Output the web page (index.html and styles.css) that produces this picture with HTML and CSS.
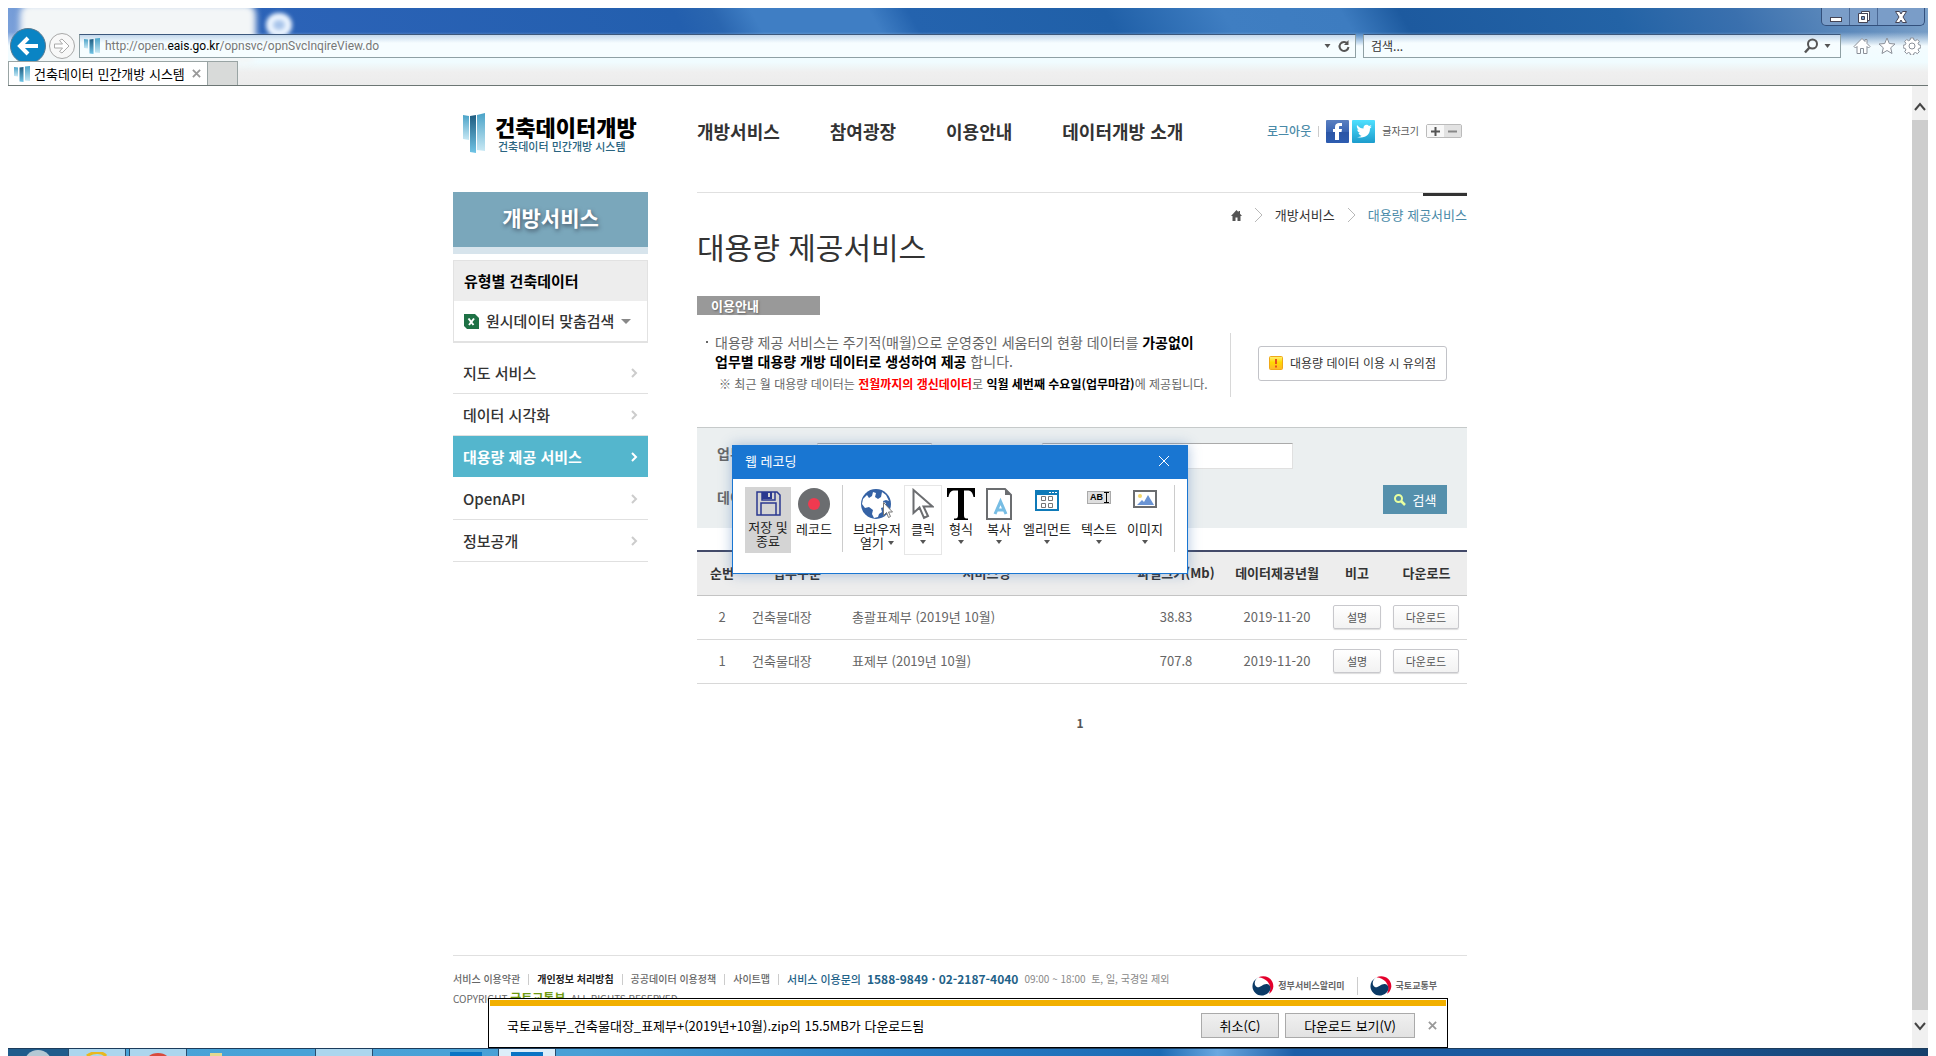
FILE: index.html
```html
<!DOCTYPE html>
<html lang="ko">
<head>
<meta charset="utf-8">
<title>건축데이터 민간개방 시스템</title>
<link rel="stylesheet" href="styles.css">
</head>
<body>
<svg class="defs" width="0" height="0" aria-hidden="true">
  <defs>
    <linearGradient id="g1" x1="0" y1="0" x2="0" y2="1"><stop offset="0" stop-color="#4aa3c8"/><stop offset="1" stop-color="#c8e8f4"/></linearGradient>
    <linearGradient id="g2" x1="0" y1="0" x2="0" y2="1"><stop offset="0" stop-color="#1f5c80"/><stop offset="1" stop-color="#6fc4e6"/></linearGradient>
    <linearGradient id="fb" x1="0" y1="0" x2="0" y2="1"><stop offset="0" stop-color="#5a7fc0"/><stop offset=".5" stop-color="#3a65b4"/><stop offset=".5" stop-color="#2b55a5"/><stop offset="1" stop-color="#2d5cb0"/></linearGradient>
    <linearGradient id="tw" x1="0" y1="0" x2="0" y2="1"><stop offset="0" stop-color="#4fe0ff"/><stop offset="1" stop-color="#1c9ccc"/></linearGradient>
    <linearGradient id="warn" x1="0" y1="0" x2="0" y2="1"><stop offset="0" stop-color="#fff07a"/><stop offset=".45" stop-color="#ffd900"/><stop offset="1" stop-color="#ffb52e"/></linearGradient>
    <symbol id="mark" viewBox="0 0 22 40"><path fill="url(#g1)" d="M0 2l6 1v24l-6-1z"/><path fill="url(#g2)" d="M7 3l6-1v38l-6-1z"/><path fill="url(#g1)" d="M14 2l8-2v38l-8-1z"/></symbol>
    <symbol id="favicon" viewBox="0 0 16 16"><path fill="url(#g1)" d="M0 1l4 .5v9L0 10z"/><path fill="url(#g2)" d="M5.500 1.500L9.500 1v15l-4-.5z"/><path fill="url(#g1)" d="M11 .5l5-.5v15l-5-.5z"/></symbol>
    <symbol id="taegeuk" viewBox="0 0 32 30"><path fill="#e4002b" d="M9 2C20-3 32 4 31.500 16 31 21 28 25 25 26.500 30 17 25 4 9 2z"/><path fill="#0b3a66" d="M9 2C4 5 2 11 5 15c5 6 10-4 17-3 6 1 7 9 2 13-5 5-14 6-19 1C-2 20-2 8 9 2z"/></symbol>
    <symbol id="chev" viewBox="0 0 7 10"><path d="M1 1l4 4-4 4" fill="none" stroke="currentColor" stroke-width="2"/></symbol>
    <symbol id="crumb" viewBox="0 0 9 16"><path d="M1 1l7 7-7 7" fill="none" stroke="#b8b8b8" stroke-width="1"/></symbol>
    <symbol id="down" viewBox="0 0 6 4"><path d="M0 0h6L3 4z" fill="#555"/></symbol>
    <symbol id="cross" viewBox="0 0 10 10"><path d="M1 1l8 8M9 1L1 9" fill="none" stroke="currentColor" stroke-width="2"/></symbol>
  </defs>
</svg>

<header class="chrome">
  <div class="ghost-tab"></div>
  <div class="ghost-dot"></div>
  <div class="title-row">
    <div class="win-controls">
      <button type="button" aria-label="최소화"><svg width="14" height="14" viewBox="0 0 14 14"><rect x="1.500" y="7.500" width="11" height="4" fill="#fff" stroke="#445"/></svg></button>
      <button type="button" aria-label="이전 크기로"><svg width="14" height="14" viewBox="0 0 14 14"><path fill="#fff" stroke="#445" d="M4.500 1.500h8v9h-2v-7h-6zM1.500 3.500h9v9h-9zM4.500 6.500v3h3v-3z" fill-rule="evenodd"/></svg></button>
      <button type="button" class="wide" aria-label="닫기"><svg width="14" height="14" viewBox="0 0 14 14"><path fill="#fff" stroke="#445" d="M1.500 1.500h4L7 4l1.500-2.500h4L9 7l3.500 5.500h-4L7 10l-1.500 2.500h-4L5 7z"/></svg></button>
    </div>
  </div>
  <div class="nav-row">
    <button type="button" class="back" aria-label="뒤로"><svg width="22" height="20" viewBox="0 0 22 20"><path d="M11 2L3 10l8 8M3 10h18" fill="none" stroke="#fff" stroke-width="4"/></svg></button>
    <button type="button" class="fwd" aria-label="앞으로"><svg width="18" height="16" viewBox="0 0 18 16"><path d="M1.500 6h8l-3-3.500L9 1l7 7-7 7-2.500-1.500 3-3.500h-8z" fill="#fff" stroke="#aaa"/></svg></button>
    <div class="address">
      <svg class="fav" width="16" height="16"><use href="#favicon"/></svg>
      <div class="url">http://open.<b>eais.go.kr</b>/opnsvc/opnSvcInqireView.do</div>
      <svg width="7" height="4"><use href="#down"/></svg>
      <button type="button" aria-label="새로 고침"><svg width="12" height="14" viewBox="0 0 12 14"><path d="M9.500 4.500A4.500 4.500 0 1 0 10.500 8" fill="none" stroke="#555" stroke-width="2"/><path d="M10.500 1v5H6z" fill="#555"/></svg></button>
    </div>
    <div class="find">
      <input type="text" aria-label="검색" placeholder="검색...">
      <button type="button" aria-label="검색"><svg width="16" height="16" viewBox="0 0 16 16"><circle cx="9.500" cy="6" r="4.500" fill="none" stroke="#555" stroke-width="2"/><path d="M6.500 9.500L2 14.500" stroke="#555" stroke-width="2.500"/></svg></button>
      <svg width="7" height="4"><use href="#down"/></svg>
    </div>
    <div class="tools">
      <button type="button" aria-label="홈"><svg width="18" height="18" viewBox="0 0 18 18"><path d="M9 1.500L1 9.500l1.500 1.500L4 9.500v7h3.500v-5h3v5H14v-7l1.500 1.500L17 9.500 14 6.500v-4h-2v2z" fill="#fff" stroke="#8a8f98"/></svg></button>
      <button type="button" aria-label="즐겨찾기"><svg width="18" height="18" viewBox="0 0 18 18"><path d="M9 1l2.300 5.500 5.700.5-4.300 3.800L14 16.500 9 13.500 4 16.500l1.300-5.700L1 7l5.700-.5z" fill="#fff" stroke="#8a8f98"/></svg></button>
      <button type="button" aria-label="도구"><svg width="18" height="18" viewBox="0 0 18 18"><path d="M7.500 1h3l.4 2 1.600.7 1.800-1.200 2 2-1.200 1.800.7 1.500 2 .5v2.600l-2 .5-.7 1.500 1.200 1.800-2 2-1.800-1.200-1.600.7-.4 2h-3l-.4-2-1.600-.7-1.800 1.200-2-2 1.200-1.800-.7-1.500-2-.5V8.300l2-.5.7-1.500L1.700 4.500l2-2 1.800 1.200L7.100 3z" fill="#fff" stroke="#8a8f98"/><circle cx="9" cy="9" r="3" fill="#fff" stroke="#8a8f98"/></svg></button>
    </div>
  </div>
  <div class="tab-row">
    <div class="tab"><svg class="fav" width="16" height="16"><use href="#favicon"/></svg><span>건축데이터 민간개방 시스템</span><button type="button" aria-label="탭 닫기"><svg width="9" height="9"><use href="#cross"/></svg></button></div>
    <button type="button" class="new-tab" aria-label="새 탭"></button>
  </div>
</header>

<div class="view">
  <div class="page">
    <div class="wrap">
      <header class="site-head">
        <a class="logo" href="#">
          <svg width="22" height="40"><use href="#mark"/></svg>
          <span class="logo-text"><strong>건축데이터개방</strong><span>건축데이터 민간개방 시스템</span></span>
        </a>
        <nav class="gnb"><a href="#">개방서비스</a><a href="#">참여광장</a><a href="#">이용안내</a><a href="#">데이터개방 소개</a></nav>
        <div class="util">
          <a href="#" class="logout">로그아웃</a><i class="bar"></i>
          <a href="#" class="sns" aria-label="페이스북"><svg width="23" height="23" viewBox="0 0 23 23"><rect width="23" height="23" rx="1" fill="url(#fb)"/><path fill="#fff" d="M9 20v-8H7V9h2V7c0-3 2-4 4-4h3v3h-2c-1 0-1 .5-1 1.500V9h3l-.5 3H13v8z"/></svg></a>
          <a href="#" class="sns" aria-label="트위터"><svg width="23" height="23" viewBox="0 0 23 23"><rect width="23" height="23" rx="1" fill="url(#tw)"/><path fill="#fff" d="M5 5c2 2.500 4 3.500 6.500 3.500C11 5 15 3.500 17 6l2.500-1-1.300 2 1.500-.3-1.700 1.800C18 15 13 19 5 17c2 0 3.300-.3 4.500-1.300C8 15.500 7 14.500 6.500 13H8c-2-.8-2.700-2-2.700-3.500l1.400.3C5 8.500 4.500 6.500 5 5z"/></svg></a>
          <span class="size-label">글자크기</span>
          <span class="size-btns"><button type="button" aria-label="글자 크게"><svg width="9" height="9" viewBox="0 0 9 9"><path d="M0 4.500h9M4.500 0v9" stroke="#555" stroke-width="2"/></svg></button><button type="button" aria-label="글자 작게"><svg width="9" height="9" viewBox="0 0 9 9"><path d="M0 4.500h9" stroke="#888" stroke-width="2"/></svg></button></span>
        </div>
      </header>

      <div class="cols">
        <aside class="side">
          <h2>개방서비스</h2>
          <div class="side-box">
            <strong>유형별 건축데이터</strong>
            <a href="#"><svg width="15" height="15" viewBox="0 0 15 15"><path fill="#1e7145" d="M0 0h11l4 4v11H3l-3-3z"/><path d="M4.500 4.500l5 6.500M10 4.500l-5 6.500" stroke="#fff" stroke-width="2"/></svg>원시데이터 맞춤검색<svg width="10" height="5" viewBox="0 0 10 5"><path fill="#888" d="M0 0h10L5 5z"/></svg></a>
          </div>
          <nav class="lnb">
            <a href="#">지도 서비스<svg width="7" height="10"><use href="#chev"/></svg></a>
            <a href="#">데이터 시각화<svg width="7" height="10"><use href="#chev"/></svg></a>
            <a href="#" class="on">대용량 제공 서비스<svg width="7" height="10"><use href="#chev"/></svg></a>
            <a href="#">OpenAPI<svg width="7" height="10"><use href="#chev"/></svg></a>
            <a href="#">정보공개<svg width="7" height="10"><use href="#chev"/></svg></a>
          </nav>
        </aside>

        <main class="main">
          <div class="crumbs">
            <a href="#" aria-label="홈"><svg width="11" height="11" viewBox="0 0 11 11"><path fill="#555" d="M5.500 0L0 6h1.500v5h3V7.500h2V11h3V6H11L9 3.800V1H7.500v1.200z"/></svg></a>
            <svg width="9" height="16"><use href="#crumb"/></svg>
            <a href="#">개방서비스</a>
            <svg width="9" height="16"><use href="#crumb"/></svg>
            <a href="#" class="here">대용량 제공서비스</a>
          </div>
          <h1>대용량 제공서비스</h1>
          <h3>이용안내</h3>
          <div class="info">
            <div class="info-text">
              <p class="lead">대용량 제공 서비스는 주기적(매월)으로 운영중인 세움터의 현황 데이터를 <b>가공없이<br>업무별 대용량 개방 데이터로 생성하여 제공</b> 합니다.</p>
              <p class="note">※ 최근 월 대용량 데이터는 <b class="red">전월까지의 갱신데이터</b>로 <b>익월 세번째 수요일(업무마감)</b>에 제공됩니다.</p>
            </div>
            <button type="button" class="caution"><svg width="14" height="14" viewBox="0 0 14 14"><rect x=".5" y=".5" width="13" height="13" rx="1" fill="url(#warn)" stroke="#f0a818"/><path d="M7 3v5M7 9.500v2" stroke="#e8501c" stroke-width="2"/></svg>대용량 데이터 이용 시 유의점</button>
          </div>

          <form class="search">
            <label for="biz">업무구분</label>
            <select id="biz"><option></option></select>
            <input type="text" class="svc" aria-label="서비스명">
            <label for="ym">데이터제공년월</label>
            <select id="ym"><option></option></select>
            <button type="button" class="go"><svg width="12" height="12" viewBox="0 0 12 12"><circle cx="4.500" cy="4.500" r="3.500" fill="none" stroke="#e8ffa0" stroke-width="2"/><path d="M7 7l4 4" stroke="#e8ffa0" stroke-width="2.500"/></svg>검색</button>
          </form>

          <table class="list">
            <colgroup><col class="c-no"><col class="c-biz"><col><col class="c-size"><col class="c-date"><col class="c-desc"><col class="c-down"></colgroup>
            <thead><tr><th>순번</th><th>업무구분</th><th>서비스명</th><th>파일크기(Mb)</th><th>데이터제공년월</th><th>비고</th><th>다운로드</th></tr></thead>
            <tbody>
              <tr><td>2</td><td class="l">건축물대장</td><td class="l">총괄표제부 (2019년 10월)</td><td>38.83</td><td>2019-11-20</td><td><button type="button">설명</button></td><td><button type="button" class="dl">다운로드</button></td></tr>
              <tr><td>1</td><td class="l">건축물대장</td><td class="l">표제부 (2019년 10월)</td><td>707.8</td><td>2019-11-20</td><td><button type="button">설명</button></td><td><button type="button" class="dl">다운로드</button></td></tr>
            </tbody>
          </table>
          <div class="pager"><a href="#">1</a></div>

          <section class="recorder" aria-label="웹 레코딩">
            <header><span>웹 레코딩</span><button type="button" aria-label="닫기"><svg width="12" height="12" viewBox="0 0 12 12"><path d="M1 1l10 10M11 1L1 11" stroke="#fff" stroke-width="1"/></svg></button></header>
            <div class="ribbon">
              <button type="button" class="save"><span class="pic"><svg width="25" height="25" viewBox="0 0 25 25"><path d="M1 1h20l3 3v20H1zM6 1v8h13V1M5 24V12h15v12" fill="none" stroke="#2b3990" stroke-width="1.500"/><path d="M6 1h10v7H6z" fill="#2b3990"/><path d="M12 2h2v4h-2z" fill="#d4d4d4"/></svg></span>저장 및<br>종료</button>
              <button type="button" class="rec"><span class="pic"><svg width="32" height="32" viewBox="0 0 32 32"><circle cx="16" cy="16" r="16" fill="#6b6d70"/><circle cx="16" cy="16" r="6" fill="#f03a50"/></svg></span>레코드</button>
              <i class="rule"></i>
              <button type="button" class="browser"><span class="pic"><svg width="34" height="32" viewBox="0 0 34 32"><circle cx="16" cy="16" r="15" fill="#3562a5"/><path fill="#fff" d="M3 11l4-4 2 3 3-2 1-4 3 1-1 4 3 2 3-2 3 2-1 3 3 1-2 4-3 1 1 4-3 2-1 3-4 1-2-4 1-4-4-3-4 1-3-4zM22 4l4 3 3 6-3-1-3 1-2-4z"/><path fill="#fff" stroke="#777" d="M23.500 14.500v13l3-3 2 5 2-1-2-4.500h4z"/></svg></span>브라우저<br><span class="drop">열기 <svg width="6" height="4"><use href="#down"/></svg></span></button>
              <button type="button" class="click"><span class="pic"><svg width="22" height="32" viewBox="0 0 22 32"><path d="M1.500 2v23l6-5.500 4.500 10.500 4-2-4.500-9.500h9z" fill="#fff" stroke="#6b6d70" stroke-width="2"/></svg></span>클릭<svg class="arr" width="6" height="4"><use href="#down"/></svg></button>
              <button type="button" class="type"><span class="pic"><svg width="28" height="32" viewBox="0 0 28 32"><path d="M0 0h28v9h-1.500c-1-5-2.500-6.500-6.500-6.500h-3V27c0 3 1 3.500 4 3.500V32H7v-1.500c3 0 4-.5 4-3.500V2.500H8c-4 0-5.500 1.500-6.500 6.500H0z"/></svg></span>형식<svg class="arr" width="6" height="4"><use href="#down"/></svg></button>
              <button type="button" class="copy"><span class="pic"><svg width="26" height="32" viewBox="0 0 26 32"><path d="M1 1h18l6 6v24H1z" fill="#fff" stroke="#6b6d70" stroke-width="2"/><path d="M19 1v6h6z" fill="#6b6d70"/><path d="M9 26l5.500-12.500L20 26M11 22h7" fill="none" stroke="#77bde4" stroke-width="3"/></svg></span>복사<svg class="arr" width="6" height="4"><use href="#down"/></svg></button>
              <button type="button" class="elem"><span class="pic"><svg width="24" height="21" viewBox="0 0 24 21"><path fill="#0f7ab8" d="M0 0h24v21H0z"/><path fill="#fff" d="M2 5h20v14H2z"/><path d="M14 2.500h2M17 2.500h2M20 2.500h2" stroke="#fff"/><path d="M6.500 6.500h4v4h-4zM13.500 6.500h4v4h-4zM6.500 13.500h4v4h-4zM13.500 13.500h4v4h-4z" fill="none" stroke="#777"/></svg></span>엘리먼트<svg class="arr" width="6" height="4"><use href="#down"/></svg></button>
              <button type="button" class="text"><span class="pic"><span class="abi">AB<svg width="5" height="11" viewBox="0 0 5 11"><path d="M0 .5h5M0 10.500h5M2.500 0v11" stroke="#000"/></svg></span></span>텍스트<svg class="arr" width="6" height="4"><use href="#down"/></svg></button>
              <button type="button" class="img"><span class="pic"><svg width="24" height="18" viewBox="0 0 24 18"><rect x="1" y="1" width="22" height="16" fill="#fff" stroke="#6b6d70" stroke-width="2"/><circle cx="7" cy="6" r="2" fill="#f5d76a"/><path fill="#6a94d4" d="M4 15l5-5 2 2 4-7 6 10z"/></svg></span>이미지<svg class="arr" width="6" height="4"><use href="#down"/></svg></button>
              <i class="rule"></i>
            </div>
          </section>
        </main>
      </div>

      <footer class="foot">
        <div class="foot-left">
          <div class="foot-links"><a href="#">서비스 이용약관</a><i class="bar"></i><a href="#" class="dark">개인정보 처리방침</a><i class="bar"></i><a href="#">공공데이터 이용정책</a><i class="bar"></i><a href="#">사이트맵</a><i class="bar"></i><span class="ask">서비스 이용문의</span><b class="tel">1588-9849 · 02-2187-4040</b><span class="hours">09:00 ~ 18:00&nbsp; 토, 일, 국경일 제외</span></div>
          <p>COPYRIGHT <b>국토교통부</b>. ALL RIGHTS RESERVED.</p>
        </div>
        <div class="foot-logos"><a href="#"><svg width="22" height="20"><use href="#taegeuk"/></svg>정부서비스알리미</a><i class="bar"></i><a href="#"><svg width="22" height="20"><use href="#taegeuk"/></svg>국토교통부</a></div>
      </footer>
    </div>

    <div class="download" role="status">
      <span>국토교통부_건축물대장_표제부+(2019년+10월).zip의 15.5MB가 다운로드됨</span>
      <button type="button" class="cancel">취소(C)</button>
      <button type="button" class="show">다운로드 보기(V)</button>
      <button type="button" class="x" aria-label="알림 닫기"><svg width="9" height="9"><use href="#cross"/></svg></button>
    </div>
  </div>
  <div class="scroll" aria-hidden="true">
    <svg width="16" height="34" viewBox="0 0 16 34"><path d="M3 24l5-6 5 6" fill="none" stroke="#444" stroke-width="2"/></svg>
    <div class="thumb"></div>
    <svg width="16" height="38" viewBox="0 0 16 38"><path d="M3 13l5 6 5-6" fill="none" stroke="#444" stroke-width="2"/></svg>
  </div>
</div>

<div class="taskbar" aria-hidden="true">
  <div class="start"><i></i></div>
  <div class="task"><svg width="22" height="4" viewBox="0 0 22 4"><path d="M1 4C6 0 16-1 20 4" fill="none" stroke="#e8b820" stroke-width="3"/></svg></div>
  <div class="task"><svg width="22" height="4" viewBox="0 0 22 4"><path d="M2 4C6 0 16 0 20 4z" fill="#d84a3c"/></svg></div>
  <div class="task plain"><svg width="22" height="4" viewBox="0 0 22 4"><path d="M2 1h12v3H2z" fill="#e4d890"/></svg></div>
  <div class="task wide-gap"></div>
  <div class="task plain"></div>
  <div class="task plain"><b></b></div>
  <div class="task active"><b></b></div>
</div>
</body>
</html>
```

FILE: styles.css
```css
* { box-sizing: border-box; }
body {
  margin: 0;
  padding: 8px 8px 0;
  min-height: 100vh;
  display: flex;
  flex-direction: column;
  background: #fff;
  color: #333;
  font: 13px/18px "Noto Sans CJK KR", "Noto Sans", sans-serif;
}
a { color: inherit; text-decoration: none; }
h1, h2, h3, p { margin: 0; }
svg { display: block; flex: none; }
.defs { position: absolute; }
button { font: inherit; color: inherit; margin: 0; padding: 0; border: 0; background: none; white-space: nowrap; }
input, select { font: inherit; margin: 0; min-width: 0; }
.bar { width: 1px; height: 11px; background: #ccc; flex: none; }

/* browser frame */
.chrome {
  position: relative;
  overflow: hidden;
  border-bottom: 1px solid #6c7674;
  background:
    linear-gradient(to bottom, transparent 24px, #f4fcff 38px, #f0fcff 54px, #efefef 64px, #ececec 100%),
    linear-gradient(60deg, #84a8de 0, #2c63b8 14%, #235fae 36%, #2a66b0 38%, #3f7ec4 40%, #3f7ec4 46%, #2463ae 48%, #2060a8 58%, #3f7ec2 64%, #3d7cc0 70%, #1d5a9f 73%, #2363a6 84%, #3a70ae 90%, #7ba0c8 100%);
}
.ghost-tab {
  position: absolute; left: 12px; top: -4px; width: 236px; height: 60px;
  background: #f3f6f7; border-radius: 10px; filter: blur(3px);
}
.ghost-dot {
  position: absolute; left: 258px; top: 5px; width: 26px; height: 24px;
  border: 7px solid #eef6ff; background: #a8c4ea; border-radius: 13px; filter: blur(2px);
}
.title-row { position: relative; height: 20px; display: flex; justify-content: flex-end; padding-right: 3px; }
.win-controls { display: flex; height: 18px; border: 1px solid #33507c; border-top: 0; border-radius: 0 0 5px 5px; background: #7a9dc8; }
.win-controls button { width: 28px; display: grid; place-items: center; border-right: 1px solid #4a6894; }
.win-controls .wide { width: 46px; border: 0; }
.nav-row { position: relative; height: 33px; display: flex; align-items: center; padding: 2px 7px 0 2px; }
.back { width: 36px; height: 36px; border-radius: 50%; background: #0a84c4; border: 1px solid #5a7a90; display: grid; place-items: center; flex: none; }
.fwd { width: 26px; height: 26px; margin-left: 3px; border-radius: 50%; border: 1px solid #a8a8a8; background: #f8f8f8; display: grid; place-items: center; flex: none; }
.address, .find { display: flex; align-items: center; height: 24px; border: 1px solid #8fa0a4; border-top-color: #3c587c; background: linear-gradient(#c4d8ec, #f6fdff 8px); color: #555; }
.address { flex: 1; margin-left: 4px; padding: 0 5px 0 4px; gap: 5px; }
.fav { width: 16px; height: 16px; }
.url { flex: 1; color: #777; font-family: Roboto, "Noto Sans", sans-serif; font-size: 12px; }
.url b { font-weight: 400; color: #000; }
.address button { margin-left: 2px; }
.find { width: 478px; margin-left: 7px; padding: 0 9px 0 7px; gap: 5px; }
.find input { flex: 1; border: 0; background: none; padding: 0; color: #333; font-size: 12px; }
.find input::placeholder { color: #333; opacity: 1; }
.tools { display: flex; gap: 7px; margin-left: 12px; width: 68px; }
.tab-row { position: relative; height: 24px; display: flex; }
.tab { display: flex; align-items: center; width: 200px; padding: 0 6px 0 5px; gap: 4px; border: 1px solid #99a4a4; border-bottom: 0; background: #fff; color: #000; white-space: nowrap; }
.tab span { flex: 1; }
.tab button, .download .x { color: #999; }
.new-tab { width: 30px; background: #d8dad9; border: 1px solid #99a4a4; border-width: 1px 1px 0 0; }

.view { flex: 1; display: flex; }
.page { flex: 1; position: relative; display: flex; flex-direction: column; min-width: 0; }
.scroll { width: 16px; background: #f0f0f0; display: flex; flex-direction: column; }
.thumb { flex: 1; background: #cdcdcd; }
.wrap { flex: 1; width: 1014px; max-width: 100%; margin: 0 auto; display: flex; flex-direction: column; }

/* site header */
.site-head { display: flex; align-items: center; height: 106px; padding-bottom: 12px; white-space: nowrap; }
.logo { width: 244px; padding-left: 10px; display: flex; gap: 10px; }
.logo-text { display: flex; flex-direction: column; font-size: 11px; line-height: 14px; font-weight: 500; color: #2a6480; }
.logo-text strong { font-size: 22px; line-height: 26px; font-weight: 900; color: #000; }
.logo-text span { padding-left: 3px; }
.gnb { display: flex; gap: 50px; padding-bottom: 4px; font-size: 18px; line-height: 26px; font-weight: 700; }
.util { margin-left: auto; padding-right: 5px; display: flex; align-items: center; gap: 7px; padding-bottom: 4px; }
.logout { color: #4a8aa8; font-size: 12px; font-weight: 500; }
.sns + .sns { margin-left: -4px; }
.size-label { font-size: 10px; color: #555; }
.size-btns { display: flex; border: 1px solid #bbb; border-radius: 2px; }
.size-btns button { width: 17px; height: 12px; display: grid; place-items: center; background: #f8f8f8; }
.size-btns button + button { background: #e2e2e2; }

/* left menu */
.cols { display: flex; gap: 49px; }
.side { width: 195px; flex: none; font-size: 15px; font-weight: 500; }
.side h2 { height: 62px; border-bottom: 7px solid #d7e4ec; background: #7aa7bb; color: #fff; text-align: center; font-size: 21px; line-height: 51px; text-shadow: 1px 2px 4px #456; }
.side-box { margin-top: 6px; border: 1px solid #e2e2e2; border-bottom-width: 2px; }
.side-box strong { display: block; padding: 0 10px; line-height: 40px; font-weight: 700; color: #000; background: #ededed; }
.side-box a { display: flex; align-items: center; gap: 7px; height: 40px; padding: 0 10px; white-space: nowrap; }
.lnb { margin-top: 9px; }
.lnb a { display: flex; align-items: center; justify-content: space-between; height: 42px; padding: 0 10px; border-bottom: 1px solid #e0e0e0; }
.lnb svg { color: #ccc; }
.lnb .on { background: #54b6cd; color: #fff; font-weight: 700; border-color: #fff; }
.lnb .on svg { color: #fff; }

/* content */
.main { position: relative; flex: 1; min-width: 0; border-top: 1px solid #e0e0e0; }
.main::before { content: ""; position: absolute; right: 0; top: 0; width: 44px; height: 3px; background: #333; }
.crumbs { display: flex; justify-content: flex-end; align-items: center; gap: 12px; margin-top: 11px; line-height: 22px; }
.here { color: #4a8aa8; }
h1 { font-size: 30px; line-height: 40px; font-weight: 400; }
h3 { margin-top: 30px; width: 123px; padding-left: 14px; background: #999; color: #fff; font-size: 13px; line-height: 19px; font-weight: 700; text-shadow: 1px 1px 2px #666; }
.info { display: flex; align-items: center; margin-top: 18px; white-space: nowrap; }
.info-text { flex: 1; height: 64px; padding-left: 18px; border-right: 1px solid #d8d8d8; color: #666; }
.info-text b { color: #000; }
.info-text .red { color: #f00; }
.lead { position: relative; font-size: 14px; line-height: 19px; }
.lead::before { content: ""; position: absolute; left: -9px; top: 8px; width: 2px; height: 2px; background: #666; }
.note { margin-top: 4px; padding-left: 4px; font-size: 12px; }
.caution { display: flex; align-items: center; justify-content: center; gap: 7px; width: 189px; height: 35px; margin: 0 20px 4px 27px; border: 1px solid #c2c3c8; border-radius: 3px; font-size: 12px; background: #fff; }
.search { display: grid; grid-template-columns: 100px 115px 251px 1fr; grid-template-rows: 26px 29px; row-gap: 16px; align-items: center; height: 101px; margin-top: 30px; padding: 15px 20px 0; background: #ebeff0; border-top: 1px solid #c6caca; color: #666; }
.search label { font-size: 14px; font-weight: 700; white-space: nowrap; padding-bottom: 6px; }
.search select, .svc { height: 26px; border: 1px solid #e0e0e0; border-top-color: #aaa; background: #fff; border-radius: 0; }
.svc { grid-column: 3 / 5; width: 251px; margin-left: 110px; }
.go { grid-column: 4; justify-self: end; display: flex; align-items: center; justify-content: center; gap: 7px; width: 64px; height: 29px; background: #5590ac; color: #fff; }
.list { width: 100%; margin-top: 22px; table-layout: fixed; border-collapse: collapse; border-top: 2px solid #434a69; color: #666; }
.c-no { width: 50px; }
.c-biz, .c-size { width: 100px; }
.c-date { width: 102px; }
.c-desc { width: 58px; }
.c-down { width: 81px; }
.list th { height: 44px; padding: 0; background: #ededed; border-bottom: 1px solid #c4c4c4; color: #333; font-weight: 700; white-space: nowrap; }
.list td { height: 44px; padding: 0 5px; text-align: center; border-bottom: 1px solid #d8d8d8; }
.list .l { text-align: left; }
.list button { display: block; width: 48px; height: 24px; border: 1px solid #c8c8cc; border-radius: 2px; background: linear-gradient(#fff, #f2f2f2); box-shadow: 0 1px 1px #ddd; font-size: 11px; color: #555; }
.list .dl { width: 66px; margin-left: 2px; }
.pager { margin-top: 30px; padding-right: 4px; text-align: center; font-size: 12px; font-weight: 700; color: #555; }

/* floating recorder window */
.recorder { position: absolute; left: 35px; top: 252px; width: 456px; height: 129px; border: 1px solid #1976d2; background: #fff; box-shadow: 0 0 12px rgba(70, 120, 180, .45); color: #222; }
.recorder header { display: flex; justify-content: space-between; align-items: center; height: 33px; padding: 0 17px 3px 12px; background: #1976d2; color: #fff; }
.ribbon { display: flex; align-items: flex-start; height: 70px; margin-top: 6px; padding-left: 12px; }
.ribbon button { display: flex; flex-direction: column; align-items: center; height: 70px; padding-top: 3px; line-height: 14px; }
.pic { display: flex; align-items: center; justify-content: center; height: 32px; margin-bottom: 2px; }
.elem .pic, .img .pic { align-items: flex-start; padding-top: 2px; }
.text .pic { align-items: flex-start; padding-top: 3px; }
.arr { margin-top: 4px; }
.drop { display: flex; align-items: center; gap: 4px; }
.rule { width: 1px; height: 67px; background: #ccc; flex: none; }
.ribbon .save { width: 46px; height: 66px; margin-top: 2px; padding-top: 1px; background: #d4d4d4; }
.ribbon .save .pic { height: 30px; margin-bottom: 2px; }
.ribbon .rec { width: 46px; margin-right: 5px; }
.ribbon .browser { width: 61px; padding-left: 7px; }
.ribbon .click { width: 38px; padding-top: 2px; border: 1px solid #e6e6e6; }
.ribbon .type, .ribbon .copy { width: 38px; }
.ribbon .elem { width: 58px; }
.ribbon .text { width: 46px; }
.ribbon .img { width: 46px; margin-right: 6px; }
.abi { display: flex; align-items: center; gap: 1px; width: 24px; height: 13px; padding-left: 2px; border: 1px solid #aaa; background: #dedede; font: 700 9px/11px "Liberation Sans", sans-serif; color: #000; }

/* footer */
.foot { display: flex; justify-content: space-between; height: 93px; margin-top: auto; border-top: 1px solid #e0e0e0; white-space: nowrap; color: #666; }
.foot-links { display: flex; align-items: center; gap: 8px; margin-top: 15px; font-size: 10px; line-height: 16px; font-weight: 500; }
.foot-links .dark { color: #222; font-weight: 700; }
.ask, .tel { color: #1f6288; }
.ask { font-size: 11px; }
.tel { font-size: 12px; margin-left: -2px; }
.hours { font-weight: 400; color: #888; margin-left: -2px; }
.foot p { margin-top: 3px; font-size: 10px; line-height: 16px; }
.foot p b { color: #6f9a10; font-size: 12px; }
.foot-logos { display: flex; align-items: center; gap: 12px; height: 20px; margin: 20px 30px 0 0; font-size: 9px; font-weight: 700; }
.foot-logos a { display: flex; align-items: center; gap: 4px; }
.foot-logos .bar { height: 18px; }

.download { position: absolute; left: 50%; bottom: 0; width: 960px; height: 50px; margin-left: -472px; display: flex; align-items: center; padding: 5px 8px 0 18px; border: 1px solid #000; background: linear-gradient(#f2b000, #f2b000) 1px 1px / calc(100% - 2px) 6px no-repeat #fff; color: #000; }
.download span { flex: 1; }
.download .cancel, .download .show { height: 25px; margin-right: 6px; border: 1px solid #aaa; background: linear-gradient(#f0f0f0, #e2e2e2); }
.download .cancel { width: 78px; }
.download .show { width: 130px; }
.download .x { padding: 0 0 0 7px; width: 18px; }

/* desktop task bar */
.taskbar { display: flex; height: 8px; border-top: 1px solid #1c3c5c; overflow: hidden; background: linear-gradient(90deg, #48a4d8 0, #4aa0d6 30%, #2a80c8 46%, #1c6ab4 60%, #6aa8e0 63%, #1c5ea8 67%, #1a5696 85%, #16406c 100%); }
.start { width: 60px; background: #205c8c; display: flex; justify-content: center; }
.start i { width: 28px; height: 28px; margin-top: 1px; border-radius: 50%; background: #b4c8d4; }
.task { width: 58px; margin-right: 3px; display: flex; justify-content: center; align-items: flex-start; border: 1px solid #2a4c6c; border-width: 0 1px; background: #acd6ee; }
.task svg { margin-top: 3px; }
.plain { border: 0; background: none; }
.wide-gap { margin-left: 64px; }
.task b { width: 32px; height: 5px; margin-top: 3px; background: #0a74c4; }
.active { background: #dceefa; }
```
